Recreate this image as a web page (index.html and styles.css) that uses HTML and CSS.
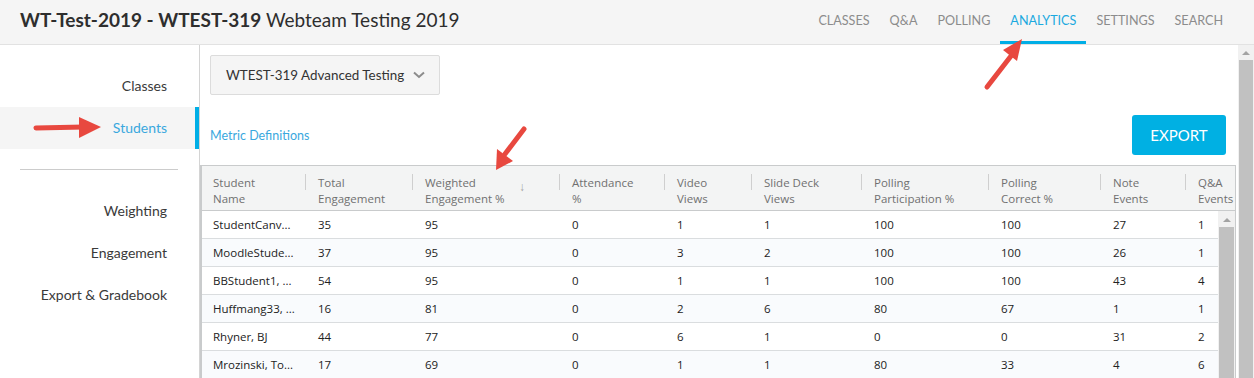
FILE: index.html
```html
<!DOCTYPE html>
<html lang="en">

<head>
    <meta charset="UTF-8">
    <title>Analytics - Webteam Testing 2019</title>
    <link rel="stylesheet" href="styles.css">
</head>

<body>
    <header class="topbar">
        <h1 class="course-title"><b>WT-Test-2019 - WTEST-319</b> Webteam Testing 2019</h1>
        <nav class="main-nav">
            <a href="#">CLASSES</a>
            <a href="#">Q&amp;A</a>
            <a href="#">POLLING</a>
            <a href="#" class="active">ANALYTICS</a>
            <a href="#">SETTINGS</a>
            <a href="#">SEARCH</a>
        </nav>
    </header>

    <div class="layout">
        <aside class="sidebar">
            <a href="#" class="side-link">Classes</a>
            <a href="#" class="side-link active">Students</a>
            <hr class="side-divider">
            <a href="#" class="side-link">Weighting</a>
            <a href="#" class="side-link">Engagement</a>
            <a href="#" class="side-link">Export &amp; Gradebook</a>
        </aside>

        <main class="content">
            <div class="toolbar">
                <button class="class-select">
                    <span>WTEST-319 Advanced Testing</span>
                    <svg width="12" height="8" viewBox="0 0 12 8"><path d="M1 1.5 L6 6 L11 1.5" fill="none" stroke="#8c8c8c" stroke-width="2"/></svg>
                </button>
            </div>
            <div class="actions">
                <a href="#" class="metric-link">Metric Definitions</a>
                <button class="export-btn">EXPORT</button>
            </div>

            <div class="grid">
                <div class="grid-head">
                    <div class="th">Student<br>Name</div>
                    <div class="th">Total<br>Engagement</div>
                    <div class="th sorted">Weighted<br>Engagement %<span class="sort-arrow">↓</span></div>
                    <div class="th">Attendance<br>%</div>
                    <div class="th">Video<br>Views</div>
                    <div class="th">Slide Deck<br>Views</div>
                    <div class="th">Polling<br>Participation %</div>
                    <div class="th">Polling<br>Correct %</div>
                    <div class="th">Note<br>Events</div>
                    <div class="th last">Q&amp;A<br>Events</div>
                </div>
                <div class="grid-body-wrap">
                    <div class="grid-body">
                        <div class="row">
                            <div>StudentCanv...</div><div>35</div><div>95</div><div>0</div><div>1</div><div>1</div><div>100</div><div>100</div><div>27</div><div>1</div>
                        </div>
                        <div class="row">
                            <div>MoodleStude...</div><div>37</div><div>95</div><div>0</div><div>3</div><div>2</div><div>100</div><div>100</div><div>26</div><div>1</div>
                        </div>
                        <div class="row">
                            <div>BBStudent1, ...</div><div>54</div><div>95</div><div>0</div><div>1</div><div>1</div><div>100</div><div>100</div><div>43</div><div>4</div>
                        </div>
                        <div class="row">
                            <div>Huffmang33, ...</div><div>16</div><div>81</div><div>0</div><div>2</div><div>6</div><div>80</div><div>67</div><div>1</div><div>1</div>
                        </div>
                        <div class="row">
                            <div>Rhyner, BJ</div><div>44</div><div>77</div><div>0</div><div>6</div><div>1</div><div>0</div><div>0</div><div>31</div><div>2</div>
                        </div>
                        <div class="row">
                            <div>Mrozinski, To...</div><div>17</div><div>69</div><div>0</div><div>1</div><div>1</div><div>80</div><div>33</div><div>4</div><div>6</div>
                        </div>
                    </div>
                    <div class="scrollbar inner">
                        <span class="scroll-up"></span>
                        <span class="scroll-thumb"></span>
                    </div>
                </div>
            </div>
        </main>

        <div class="scrollbar page">
            <span class="scroll-up"></span>
            <span class="scroll-thumb"></span>
        </div>
    </div>

    <!-- red annotation arrows drawn over the screenshot -->
    <svg class="annotations" width="1254" height="378" viewBox="0 0 1254 378">
        <g fill="#e8483f" stroke="#e8483f" stroke-width="5" stroke-linecap="round">
            <line x1="36" y1="128" x2="84" y2="127" />
            <polygon stroke="none" points="79,117 101,127 79,138" />
            <line x1="987" y1="87" x2="1011" y2="56" />
            <polygon stroke="none" points="1003,50 1022,39 1017,61" />
            <line x1="524" y1="129" x2="505" y2="154" />
            <polygon stroke="none" points="497,149 513,161 496,170" />
        </g>
    </svg>
</body>

</html>
```

FILE: styles.css
```css
body {
    margin: 0;
    font-family: Lato, 'Open Sans', sans-serif;
    color: #333;
    background: #fff;
    overflow: hidden;
}

a {
    text-decoration: none;
}

.topbar {
    height: 44px;
    background: #f5f5f5;
    border-bottom: 1px solid #e2e2e2;
    display: flex;
    justify-content: space-between;
    padding: 0 21px 0 20px;
}

.course-title {
    margin: 0;
    font-size: 19px;
    font-weight: normal;
    line-height: 40px;
    color: #2e2e2e;
}

.course-title b {
    font-weight: bold;
}

.main-nav {
    display: flex;
}

.main-nav a {
    display: block;
    padding: 0 10px;
    line-height: 41px;
    border-bottom: 3px solid transparent;
    font-size: 12.6px;
    color: #8c8c8c;
}

.main-nav a.active {
    color: #1ba9df;
    border-bottom-color: #00aee6;
}

.layout {
    display: flex;
    height: 333px;
}

.sidebar {
    width: 199px;
    flex-shrink: 0;
    border-right: 1px solid #d4d4d4;
    padding-top: 20px;
    display: flex;
    flex-direction: column;
}

.side-link {
    display: block;
    height: 42px;
    line-height: 42px;
    text-align: right;
    padding-right: 32px;
    font-size: 14px;
    color: #3a3a3a;
}

.side-link.active {
    background: #f5f5f5;
    color: #3aa8de;
    border-right: 4px solid #00aee6;
    padding-right: 28px;
}

.side-divider {
    border: none;
    border-top: 1px solid #ccc;
    margin: 20px 21px 20px 20px;
}

.content {
    flex: 1;
    min-width: 0;
    display: flex;
    flex-direction: column;
}

.toolbar {
    padding: 10px 11px 0 10px;
}

.class-select {
    height: 40px;
    width: 230px;
    background: #f5f5f5;
    border: 1px solid #dcdcdc;
    border-radius: 2px;
    padding: 0 0 0 15px;
    font-family: Lato, 'Open Sans', sans-serif;
    font-size: 13.4px;
    color: #333;
    display: flex;
    align-items: center;
    gap: 9px;
    white-space: nowrap;
}

.actions {
    display: flex;
    justify-content: space-between;
    align-items: center;
    padding: 20px 11px 10px 10px;
}

.metric-link {
    font-size: 12.5px;
    color: #3aa8de;
}

.export-btn {
    height: 40px;
    width: 94px;
    border: none;
    border-radius: 3px;
    background: #00b0e3;
    color: #fff;
    font-family: Lato, 'Open Sans', sans-serif;
    font-size: 15px;
}

.grid {
    margin-right: 1px;
    border: 1px solid #c9cbcc;
    border-left-width: 2px;
    border-bottom: none;
    font-family: 'Open Sans', sans-serif;
    font-size: 11.5px;
    flex: 1;
    display: flex;
    flex-direction: column;
    min-height: 0;
}

.grid-head,
.row {
    display: grid;
    grid-template-columns: 103px 107px 147px 105px 87px 110px 127px 112px 85px 1fr;
}

.grid-head {
    height: 44px;
    background: #f3f4f4;
    border-bottom: 1px solid #c9cbcc;
    color: #707070;
}

.th {
    position: relative;
    padding: 9px 0 0 13px;
    line-height: 16px;
    white-space: nowrap;
    overflow: hidden;
}

.th:first-child {
    padding-left: 11px;
}

.th:not(:first-child):before {
    content: "";
    position: absolute;
    left: 0;
    top: 8px;
    height: 16px;
    border-left: 1px solid #cfcfcf;
}

.sort-arrow {
    position: absolute;
    left: 107px;
    top: 13px;
    color: #a5a5a5;
    font-size: 12px;
}

.grid-body-wrap {
    flex: 1;
    display: flex;
    min-height: 0;
}

.grid-body {
    flex: 1;
}

.row {
    height: 27px;
    line-height: 27px;
    border-bottom: 1px solid #dadddf;
    color: #222;
}

.row:nth-child(even) {
    background: #f9fbfd;
}

.row div {
    padding-left: 13px;
    white-space: nowrap;
}

.row div:first-child {
    padding-left: 11px;
}

.scrollbar {
    background: #f1f1f1;
    display: flex;
    flex-direction: column;
    align-items: center;
    flex-shrink: 0;
}

.scrollbar.inner {
    width: 17px;
}

.scrollbar.page {
    width: 16px;
    margin-left: 1px;
}

.scroll-up {
    width: 0;
    height: 0;
    margin: 6px 0 5px;
    border-left: 4px solid transparent;
    border-right: 4px solid transparent;
    border-bottom: 4px solid #a3a3a3;
}

.scroll-thumb {
    flex: 1;
    width: calc(100% - 2px);
    background: #c1c1c1;
}

.scrollbar.inner .scroll-up {
    margin-top: 7px;
}

.annotations {
    position: absolute;
    left: 0;
    top: 0;
    pointer-events: none;
}
```
